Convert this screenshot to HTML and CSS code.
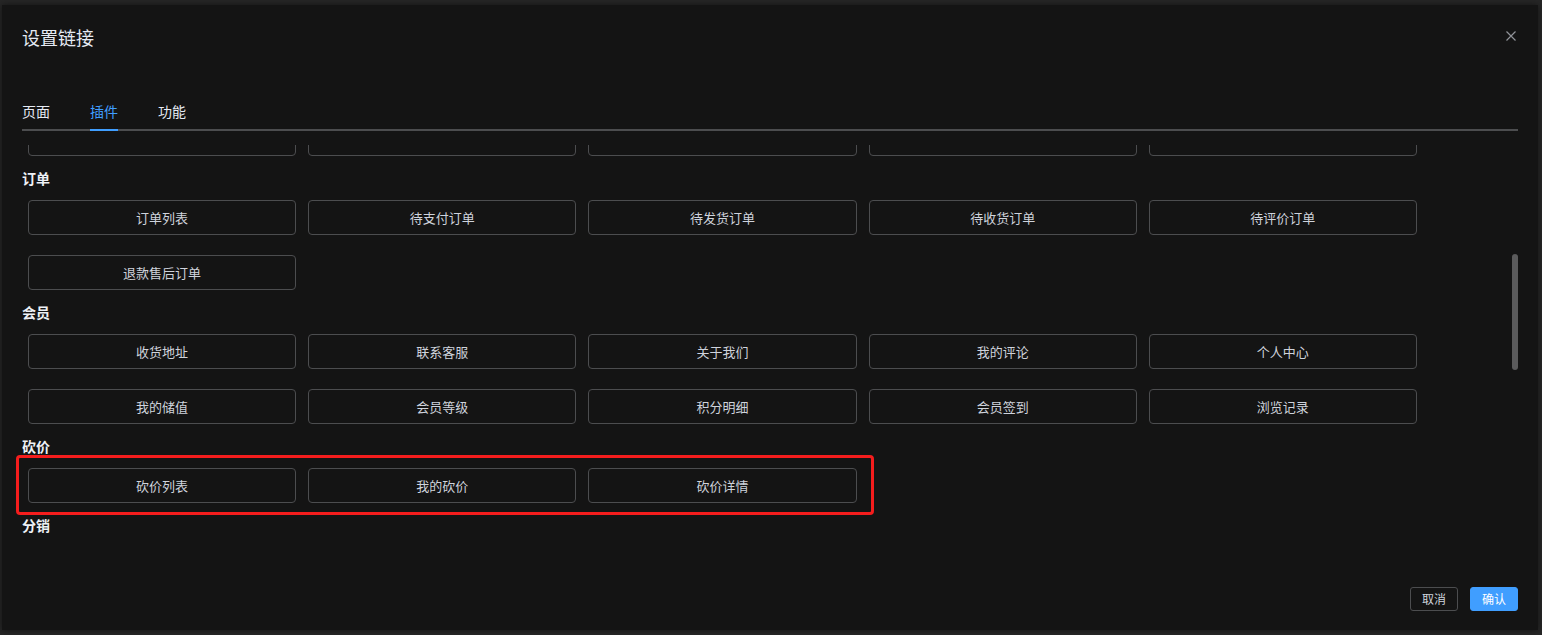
FILE: index.html
```html
<!DOCTYPE html>
<html lang="zh-CN">
<head>
<meta charset="utf-8">
<title>设置链接</title>
<link rel="stylesheet" href="styles.css">
</head>
<body>
<div class="dialog">
  <header class="dlg-header">
    <span class="dlg-title">设置链接</span>
    <button class="dlg-close" aria-label="关闭">
      <svg viewBox="0 0 10 10" width="10" height="10"><path d="M0.5 0.5L9.5 9.5M9.5 0.5L0.5 9.5"/></svg>
    </button>
  </header>
  <div class="dlg-body">
    <nav class="tabs">
      <div class="tab"><span class="tab-label">页面</span></div>
      <div class="tab"><span class="tab-label active">插件</span></div>
      <div class="tab"><span class="tab-label">功能</span></div>
    </nav>
    <div class="scroll">
      <div class="scroll-inner">
        <div class="grid">
          <div class="item"></div>
          <div class="item"></div>
          <div class="item"><span class="peek">秒杀专区</span></div>
          <div class="item"></div>
          <div class="item"></div>
        </div>
        <section class="sec">
          <h3 class="sec-title">订单</h3>
          <div class="grid">
            <div class="item">订单列表</div>
            <div class="item">待支付订单</div>
            <div class="item">待发货订单</div>
            <div class="item">待收货订单</div>
            <div class="item">待评价订单</div>
            <div class="item">退款售后订单</div>
          </div>
        </section>
        <section class="sec">
          <h3 class="sec-title">会员</h3>
          <div class="grid">
            <div class="item">收货地址</div>
            <div class="item">联系客服</div>
            <div class="item">关于我们</div>
            <div class="item">我的评论</div>
            <div class="item">个人中心</div>
            <div class="item">我的储值</div>
            <div class="item">会员等级</div>
            <div class="item">积分明细</div>
            <div class="item">会员签到</div>
            <div class="item">浏览记录</div>
          </div>
        </section>
        <section class="sec">
          <h3 class="sec-title">砍价</h3>
          <div class="grid">
            <div class="item">砍价列表</div>
            <div class="item">我的砍价</div>
            <div class="item">砍价详情</div>
          </div>
        </section>
        <section class="sec">
          <h3 class="sec-title">分销</h3>
          <div class="grid">
            <div class="item">分销中心</div>
            <div class="item">我的团队</div>
            <div class="item">佣金明细</div>
          </div>
        </section>
      </div>
      <div class="thumb"></div>
    </div>
  </div>
  <footer class="dlg-footer">
    <button class="btn">取消</button>
    <button class="btn primary">确认</button>
  </footer>
</div>
<div class="highlight"></div>
</body>
</html>
```
FILE: styles.css
```css
html, body {
  margin: 0;
  padding: 0;
}
body {
  background: #262626;
  font-family: "Noto Sans CJK SC", "Noto Sans", sans-serif;
  width: 1542px;
  height: 635px;
  overflow: hidden;
  position: relative;
}
.dialog {
  position: relative;
  width: 1536px;
  margin: 5px 0 0 2px;
  background: #141414;
  box-shadow: 0 0 6px rgba(0, 0, 0, 0.5);
}
.dlg-header {
  padding: 20px 20px 10px;
}
.dlg-title {
  display: block;
  font-size: 18px;
  line-height: 24px;
  color: #e5eaf3;
}
.dlg-close {
  position: absolute;
  top: 26px;
  right: 22px;
  width: 10px;
  height: 10px;
  padding: 0;
  border: 0;
  background: transparent;
  display: flex;
}
.dlg-close svg {
  stroke: #909399;
  stroke-width: 1.2;
  fill: none;
}
.dlg-body {
  padding: 32px 20px 30px;
}
.tabs {
  display: flex;
  height: 40px;
  box-shadow: inset 0 -2px 0 #4c4d4f;
}
.tab {
  padding: 0 20px;
}
.tab:first-child {
  padding-left: 0;
}
.tab-label {
  display: block;
  height: 40px;
  line-height: 40px;
  font-size: 14px;
  color: #e5eaf3;
}
.tab-label.active {
  color: #409eff;
  box-shadow: inset 0 -2px 0 #409eff;
}
.scroll {
  position: relative;
  height: 402px;
  margin-top: 14px;
  overflow: hidden;
}
.scroll-inner {
  margin-top: -24px;
}
.grid {
  display: grid;
  grid-template-columns: repeat(5, 268.2px);
  column-gap: 12px;
  row-gap: 20px;
  padding-left: 6px;
}
.sec-title {
  margin: 10px 0;
  font-size: 14px;
  line-height: 24px;
  font-weight: 700;
  color: #eef1f6;
}
.item {
  box-sizing: border-box;
  height: 35px;
  border: 1px solid #4c4d4f;
  border-radius: 4px;
  display: flex;
  align-items: center;
  justify-content: center;
  font-size: 13px;
  color: #cfd3dc;
}
.peek {
  margin-bottom: 3px;
}
.thumb {
  position: absolute;
  top: 109px;
  right: 0;
  width: 6px;
  height: 116px;
  border-radius: 3px;
  background: #5b5b5c;
}
.dlg-footer {
  display: flex;
  justify-content: flex-end;
  gap: 12px;
  padding: 10px 20px 19px;
}
.btn {
  box-sizing: border-box;
  width: 48px;
  height: 24px;
  padding: 0;
  border: 1px solid #4c4d4f;
  border-radius: 3px;
  background: transparent;
  color: #cfd3dc;
  font-family: inherit;
  font-size: 12px;
  line-height: 22px;
}
.btn.primary {
  background: #409eff;
  border-color: #409eff;
  color: #ffffff;
}
.highlight {
  position: absolute;
  left: 16px;
  top: 455px;
  width: 858px;
  height: 60px;
  box-sizing: border-box;
  border: 3px solid #f51d1d;
  border-radius: 4px;
}
```
